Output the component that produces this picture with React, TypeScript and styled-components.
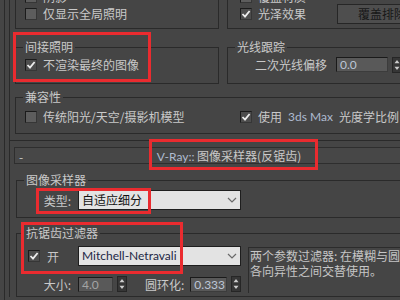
import React from 'react';
import styled, { createGlobalStyle } from 'styled-components';

/* ------------------------------ Global styles ----------------------------- */
const GlobalStyle = createGlobalStyle`
  html, body {
    margin: 0;
    padding: 0;
    width: 400px;
    height: 300px;
    overflow: hidden;
    background: #454545;
  }
  body {
    font-family: "Noto Sans CJK SC", "Noto Sans", sans-serif;
    font-size: 12px;
    color: #c9c9c9;
  }
`;

const LINE = '#2a2a2a';
const LATIN = 'Lato, "Noto Sans CJK SC", sans-serif';

/* --------------------------------- Frames --------------------------------- */
const Screen = styled.div`
  position: relative;
  display: flow-root;
  width: 470px;
  height: 300px;
  padding-left: 4px;
  box-sizing: border-box;
`;

const Outer = styled.div`
  display: flow-root;
  height: 100%;
  border-left: 1px solid ${LINE};
  padding-left: 4px;
`;

const Rollout = styled.section<{ $first?: boolean }>`
  display: flow-root;
  border-left: 1px solid ${LINE};
  border-bottom: ${(p) => (p.$first ? `1px solid ${LINE}` : 'none')};
  padding: ${(p) => (p.$first ? '0 0 6px 5px' : '6px 0 0 5px')};
`;

const GroupRow = styled.div<{ $top: number }>`
  display: flex;
  gap: 8px;
  margin-top: ${(p) => p.$top}px;
`;

const Group = styled.fieldset<{ $w?: number; $top?: number; $left?: number }>`
  margin: ${(p) => p.$top ?? 0}px 0 0 ${(p) => p.$left ?? 0}px;
  padding: 0;
  border: 1px solid ${LINE};
  min-width: 0;
  box-sizing: border-box;
  width: ${(p) => (p.$w ? `${p.$w}px` : 'auto')};
  flex: ${(p) => (p.$w ? 'none' : '1')};
`;

const Legend = styled.legend`
  margin-left: 7px;
  padding: 0 2px;
  line-height: 16px;
  font-size: 12px;
  color: #c9c9c9;
`;

const Body = styled.div<{ $pad: string }>`
  padding: ${(p) => p.$pad};
`;

/* --------------------------------- Controls ------------------------------- */
const CheckRow = styled.div<{ $w?: number }>`
  display: flex;
  align-items: center;
  gap: 6px;
  height: 17px;
  width: ${(p) => (p.$w ? `${p.$w}px` : 'auto')};
  flex: none;
  white-space: nowrap;
`;

const Box = styled.span<{ $checked?: boolean }>`
  width: 12px;
  height: 12px;
  box-sizing: border-box;
  border: 1px solid #1b1b1b;
  border-right-color: #363636;
  border-bottom-color: #363636;
  background: ${(p) => (p.$checked ? '#4d4d4d' : '#5d5d5d')};
  display: inline-flex;
  align-items: center;
  justify-content: center;
  flex: none;
`;

const Check = ({ checked }: { checked?: boolean }) => (
  <Box $checked={checked}>
    {checked && (
      <svg width="10" height="10" viewBox="0 0 10 10">
        <polyline points="1.5,5 4,7.6 8.6,2" fill="none" stroke="#ededed" strokeWidth="1.8" />
      </svg>
    )}
  </Box>
);

const Latin = styled.span`
  font-family: ${LATIN};
  color: #aebbd0;
`;

const Row = styled.div<{ $top?: number; $h?: number }>`
  display: flex;
  align-items: center;
  margin-top: ${(p) => p.$top ?? 0}px;
  height: ${(p) => (p.$h ? `${p.$h}px` : 'auto')};
`;

const Button = styled.div`
  width: 100px;
  height: 20px;
  margin: -2px 0;
  box-sizing: border-box;
  border: 1px solid #262626;
  background: #4e4e4e;
  color: #171717;
  text-align: center;
  line-height: 18px;
  flex: none;
`;

const Label = styled.span<{ $w?: number; $ml?: number }>`
  display: inline-block;
  width: ${(p) => (p.$w ? `${p.$w}px` : 'auto')};
  margin-left: ${(p) => p.$ml ?? 0}px;
  text-align: ${(p) => (p.$w ? 'right' : 'left')};
  padding-right: ${(p) => (p.$w ? 2 : 0)}px;
  box-sizing: border-box;
  white-space: nowrap;
  flex: none;
`;

const Spin = styled.div<{ $w: number; $ml: number; $dim?: boolean }>`
  width: ${(p) => p.$w}px;
  height: 15px;
  margin-left: ${(p) => p.$ml}px;
  box-sizing: border-box;
  border: 1px solid #1a1a1a;
  border-right-color: #3c3c3c;
  border-bottom-color: #3c3c3c;
  background: #595959;
  color: ${(p) => (p.$dim ? '#a4a4a4' : '#bcc6d6')};
  font-family: ${LATIN};
  padding-left: 3px;
  line-height: 13px;
  flex: none;
`;

const ArrowBox = styled.span`
  display: inline-flex;
  margin-left: 4px;
  flex: none;
`;

const Arrows = () => (
  <ArrowBox>
    <svg width="10" height="16" viewBox="0 0 10 16">
      <rect x="0.5" y="0.5" width="9" height="15" fill="#363636" stroke="#262626" />
      <path d="M5 3 L7.5 6.2 L2.5 6.2 Z" fill="#cdcdcd" />
      <path d="M5 13 L7.5 9.8 L2.5 9.8 Z" fill="#cdcdcd" />
    </svg>
  </ArrowBox>
);

const Select = styled.div<{ $navy?: boolean }>`
  width: 163px;
  height: 20px;
  margin-left: 5px;
  box-sizing: border-box;
  border: 1px solid #1e1e1e;
  background: #e3e3e3;
  color: ${(p) => (p.$navy ? '#1d2745' : '#111111')};
  font-family: ${(p) => (p.$navy ? LATIN : 'inherit')};
  display: flex;
  align-items: center;
  justify-content: space-between;
  padding: 0 3px 0 3px;
  line-height: 18px;
  flex: none;
`;

const Chevron = () => (
  <svg width="10" height="6" viewBox="0 0 10 6">
    <polyline points="1,1 5,5 9,1" fill="none" stroke="#6a6a6a" strokeWidth="1.2" />
  </svg>
);

const Header = styled.div`
  display: grid;
  grid-template-columns: 1fr auto 1fr;
  align-items: center;
  height: 17px;
  margin: 0 30px 0 -1px;
  box-sizing: border-box;
  border: 1px solid #2e2e2e;
  background: #474747;
  padding-left: 4px;
  line-height: 15px;
`;

const Title = styled.span`
  white-space: nowrap;
`;

const FilterBody = styled.div`
  display: flex;
  padding: 5px 0 3px 0;
`;

const FilterLeft = styled.div`
  width: 224px;
  flex: none;
`;

const FirstCol = styled.div`
  width: 56px;
  display: flex;
  align-items: center;
  gap: 7px;
  padding-left: 11px;
  box-sizing: border-box;
  flex: none;
`;

const Describe = styled.div`
  margin: 1px 0 0 7px;
  height: 46px;
  flex: 1;
  box-sizing: border-box;
  border-left: 1px solid #2c2c2c;
  border-top: 1px solid #2c2c2c;
  padding-left: 1px;
  white-space: nowrap;
  color: #c6c6c6;
`;

const DescLine = styled.div`
  height: 15px;
  line-height: 15px;
`;

/* ------------------------------- Annotations ------------------------------ */
const Mark = styled.div<{ $x: number; $y: number; $w: number; $h: number }>`
  position: absolute;
  left: ${(p) => p.$x}px;
  top: ${(p) => p.$y}px;
  width: ${(p) => p.$w}px;
  height: ${(p) => p.$h}px;
  box-sizing: border-box;
  border: 3px solid #ea2b2f;
  pointer-events: none;
`;

const App = () => {
  return (
    <Screen>
      <GlobalStyle />
      <Outer>
        <Rollout $first>
          <GroupRow $top={-47}>
            <Group $w={204}>
              <Legend>灯光</Legend>
              <Body $pad="2px 0 6px 9px">
                <CheckRow>
                  <Check checked />
                  隐藏灯光
                </CheckRow>
                <CheckRow>
                  <Check />
                  阴影
                </CheckRow>
                <CheckRow>
                  <Check />
                  仅显示全局照明
                </CheckRow>
              </Body>
            </Group>
            <Group>
              <Legend>材质</Legend>
              <Body $pad="2px 0 6px 12px">
                <CheckRow>
                  <Check checked />
                  过滤贴图
                </CheckRow>
                <CheckRow>
                  <Check />
                  覆盖材质
                </CheckRow>
                <Row>
                  <CheckRow $w={97}>
                    <Check checked />
                    光泽效果
                  </CheckRow>
                  <Button>覆盖排除...</Button>
                </Row>
              </Body>
            </Group>
          </GroupRow>

          <GroupRow $top={10}>
            <Group $w={204}>
              <Legend>间接照明</Legend>
              <Body $pad="1px 0 10px 9px">
                <CheckRow>
                  <Check checked />
                  不渲染最终的图像
                </CheckRow>
              </Body>
            </Group>
            <Group>
              <Legend>光线跟踪</Legend>
              <Body $pad="1px 0 10px 27px">
                <Row $h={17}>
                  <Label>二次光线偏移</Label>
                  <Spin $w={52} $ml={9}>0.0</Spin>
                  <Arrows />
                </Row>
              </Body>
            </Group>
          </GroupRow>

          <GroupRow $top={5}>
            <Group>
              <Legend>兼容性</Legend>
              <Body $pad="3px 0 8px 9px">
                <Row>
                  <CheckRow $w={215}>
                    <Check />
                    传统阳光/天空/摄影机模型
                  </CheckRow>
                  <CheckRow>
                    <Check checked />
                    使用 <Latin>3ds Max</Latin> 光度学比例
                  </CheckRow>
                </Row>
              </Body>
            </Group>
          </GroupRow>
        </Rollout>

        <Rollout>
          <Header>
            <span>-</span>
            <Title>
              <Latin>V-Ray::</Latin> 图像采样器(反锯齿)
            </Title>
            <span />
          </Header>

          <Group $top={8} $left={1}>
            <Legend>图像采样器</Legend>
            <Body $pad="2px 0 7px 0">
              <Row>
                <Label $w={56}>类型:</Label>
                <Select>
                  自适应细分
                  <Chevron />
                </Select>
              </Row>
            </Body>
          </Group>

          <Group $top={7} $left={1}>
            <Legend>抗锯齿过滤器</Legend>
            <FilterBody>
              <FilterLeft>
                <Row>
                  <FirstCol>
                    <Check checked />
                    开
                  </FirstCol>
                  <Select $navy>
                    Mitchell-Netravali
                    <Chevron />
                  </Select>
                </Row>
                <Row $top={10} $h={16}>
                  <Label $w={56}>大小:</Label>
                  <Spin $w={35} $ml={5} $dim>
                    4.0
                  </Spin>
                  <Arrows />
                  <Label $ml={18}>圆环化:</Label>
                  <Spin $w={37} $ml={6}>0.333</Spin>
                  <Arrows />
                </Row>
              </FilterLeft>
              <Describe>
                <DescLine>两个参数过滤器: 在模糊与圆环化和</DescLine>
                <DescLine>各向异性之间交替使用。</DescLine>
              </Describe>
            </FilterBody>
          </Group>
        </Rollout>
      </Outer>

      <Mark $x={13} $y={32} $w={138} $h={50} />
      <Mark $x={149} $y={139} $w={169} $h={31} />
      <Mark $x={36} $y={188} $w={115} $h={26} />
      <Mark $x={21} $y={222} $w={162} $h={52} />
    </Screen>
  );
};

export default App;
